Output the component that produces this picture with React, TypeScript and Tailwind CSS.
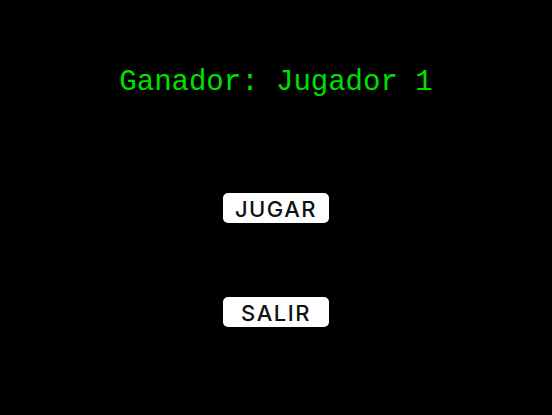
export default function App() {
  return (
    <div className="w-[552px] h-[415px] bg-black flex flex-col items-center">
      <h1 className="mt-[65px] text-[29px] leading-[36px] text-[#00e000] font-['Liberation_Mono',monospace]">
        Ganador: Jugador 1
      </h1>
      <button className="mt-[92px] w-[106px] h-[30px] bg-white rounded-[5px] text-[#111] text-[22px] font-medium tracking-[1.5px] flex items-center justify-center pt-[2px] font-['Inter',sans-serif]">
        JUGAR
      </button>
      <button className="mt-[74px] w-[106px] h-[30px] bg-white rounded-[5px] text-[#111] text-[22px] font-medium tracking-[1.5px] flex items-center justify-center pt-[2px] font-['Inter',sans-serif]">
        SALIR
      </button>
    </div>
  );
}
